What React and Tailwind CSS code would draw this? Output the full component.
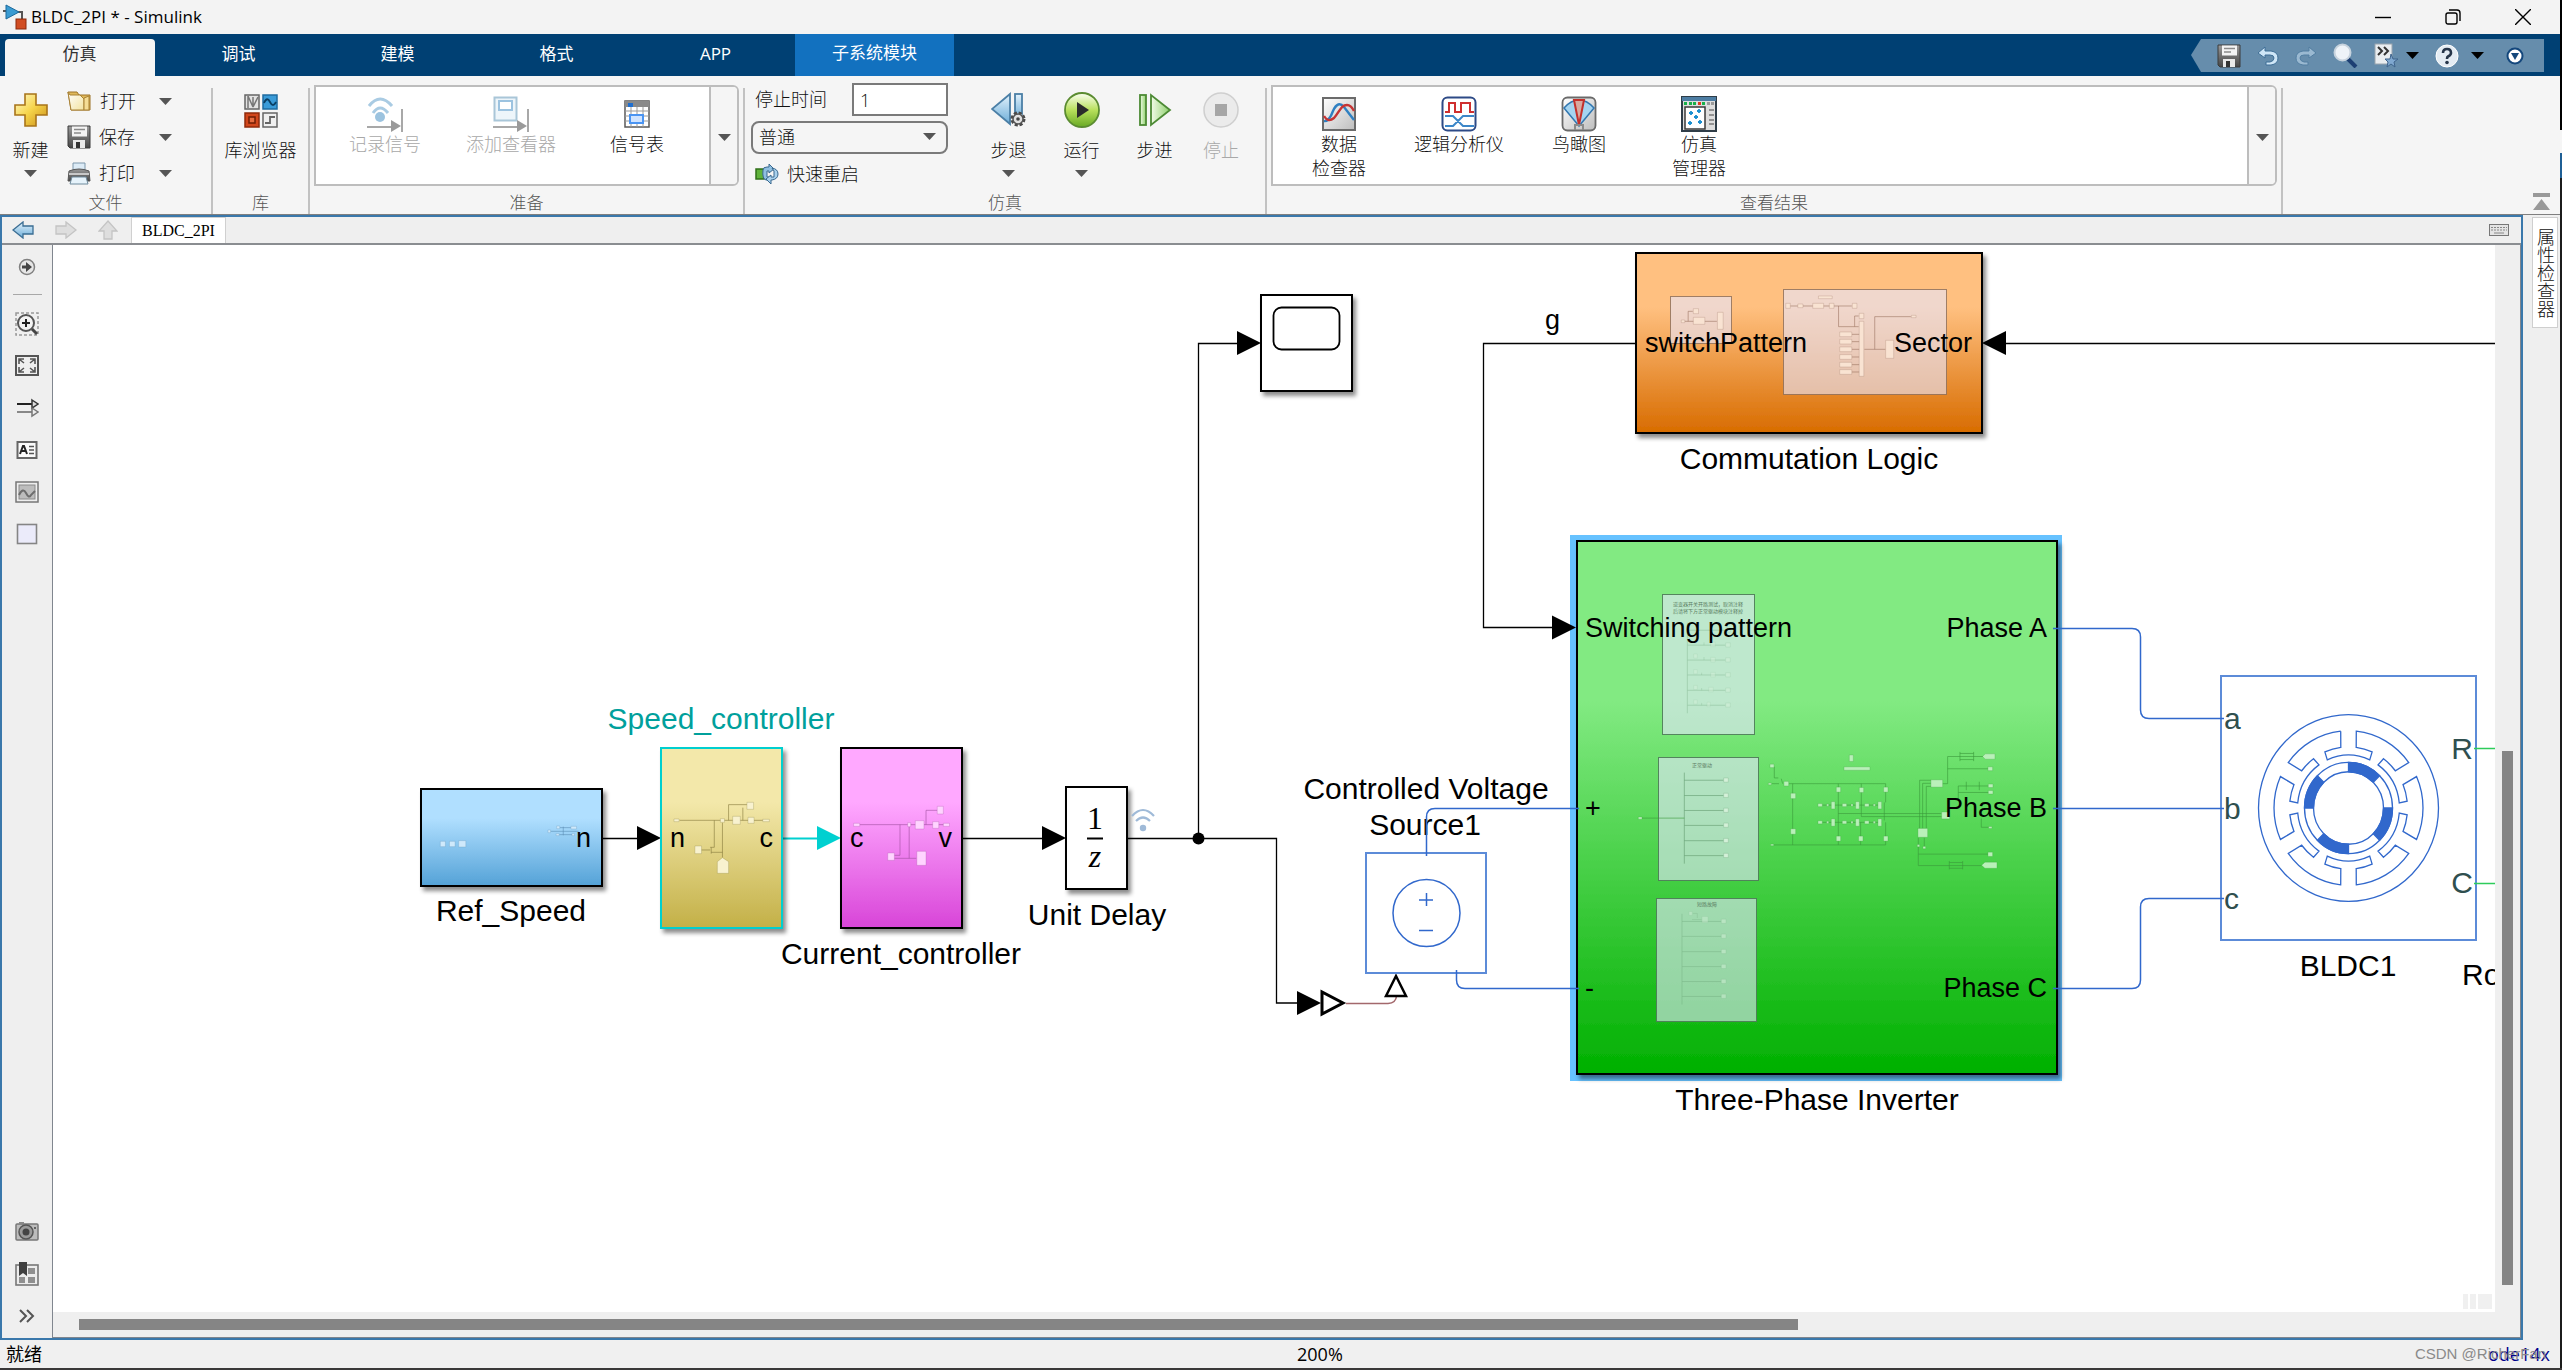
import React, { useState } from 'react';

const Caret = ({ className = 'text-[#555]' }) => (
    <svg width="13" height="7" viewBox="0 0 13 7" className={className}>
        <path d="M0 0H13L6.5 7Z" fill="currentColor" />
    </svg>
);

/* ---------- gradients shared by all icons ---------- */

const SharedDefs = () => (
    <svg width="0" height="0" className="absolute" aria-hidden="true">
        <defs>
            <linearGradient id="gold" x1="0" y1="0" x2="1" y2="1"><stop offset="0" stopColor="#fffbd0" /><stop offset=".5" stopColor="#f6d44a" /><stop offset="1" stopColor="#c98d17" /></linearGradient>
            <linearGradient id="paper" x1="0" y1="0" x2="1" y2="1"><stop offset="0" stopColor="#fff" /><stop offset="1" stopColor="#f3e3a0" /></linearGradient>
            <linearGradient id="steel" x1="0" y1="0" x2="0" y2="1"><stop offset="0" stopColor="#9a9a9a" /><stop offset="1" stopColor="#454545" /></linearGradient>
            <linearGradient id="silver" x1="0" y1="0" x2="1" y2="1"><stop offset="0" stopColor="#fff" /><stop offset="1" stopColor="#bdbdbd" /></linearGradient>
            <linearGradient id="ice" x1="0" y1="0" x2="0" y2="1"><stop offset="0" stopColor="#e3f2fc" /><stop offset="1" stopColor="#6cadd8" /></linearGradient>
            <linearGradient id="leaf" x1="0" y1="0" x2="0" y2="1"><stop offset="0" stopColor="#fbfff2" /><stop offset=".5" stopColor="#b8e05c" /><stop offset="1" stopColor="#68a924" /></linearGradient>
            <linearGradient id="mint" x1="0" y1="0" x2="1" y2="0"><stop offset="0" stopColor="#f2fbe9" /><stop offset="1" stopColor="#8ed06c" /></linearGradient>
        </defs>
    </svg>
);

/* ---------- ribbon icons ---------- */

const AppIcon = () => (
    <svg width="25" height="26" viewBox="0 0 25 26">
        <path d="M1 7H5M15 8H20V15" stroke="#555" strokeWidth="2" fill="none" />
        <path d="M4 1L17 8L4 15Z" fill="#3a9bd2" stroke="#1d6a9c" />
        <rect x="14" y="15" width="10" height="10" fill="#d14d22" stroke="#8c2a0c" />
    </svg>
);

const PlusIcon = () => (
    <svg width="34" height="34" viewBox="0 0 34 34">
        <path d="M11 1H22V12H33V22H22V33H11V22H1V12H11Z" fill="url(#gold)" stroke="#a8741a" strokeWidth="1.6" />
    </svg>
);

const FolderIcon = () => (
    <svg width="25" height="22" viewBox="0 0 25 22">
        <path d="M1 2H10L12 5H23V20H4Z" fill="#e0b95a" stroke="#9c7327" />
        <path d="M1 2L4 20H17V9L13 5L3 5Z" fill="url(#paper)" stroke="#a98235" />
        <path d="M17 8L22 6V20H17Z" fill="#f5dd95" stroke="#a98235" />
    </svg>
);

const SaveIcon = () => (
    <svg width="24" height="24" viewBox="0 0 24 24">
        <path d="M1 1H23V23H3L1 21Z" fill="url(#steel)" stroke="#3a3a3a" />
        <rect x="5" y="1.500" width="15" height="10" fill="#f4f4f4" />
        <path d="M7 4.500H18M7 8H14" stroke="#8a8a8a" strokeWidth="1.500" />
        <path d="M6 15H18V23H6Z" fill="#e9e9e9" />
        <rect x="9" y="17" width="4" height="6" fill="#333" />
    </svg>
);

const PrintIcon = () => (
    <svg width="24" height="23" viewBox="0 0 24 23">
        <path d="M6 1H18V10H6Z" fill="#dcebf6" stroke="#7d97ab" />
        <path d="M2 9Q12 5 22 9L23 19H1Z" fill="url(#steel)" stroke="#555" />
        <path d="M2 12H22" stroke="#c8c8c8" strokeWidth="2" />
        <path d="M5 15H19L21 22H3Z" fill="#e6f3fb" stroke="#6f8a9c" />
    </svg>
);

const LibraryIcon = () => (
    <svg width="34" height="34" viewBox="0 0 34 34">
        <rect x="1" y="1" width="14" height="14" fill="#e3e3e3" stroke="#666" strokeWidth="1.500" />
        <path d="M4 2V14M4 2L9 13V3M9 13L14 3" stroke="#777" strokeWidth="1.500" fill="none" />
        <rect x="19" y="1" width="14" height="14" fill="#3a9bd8" stroke="#1f6b9f" strokeWidth="1.500" />
        <path d="M20 9Q23 2 26 8T32 8" stroke="#0b3f63" strokeWidth="1.800" fill="none" />
        <rect x="1" y="19" width="14" height="14" fill="#d1461b" stroke="#8f2a0b" strokeWidth="1.500" />
        <rect x="5" y="23" width="6" height="6" fill="#e56b3f" stroke="#6f1d05" strokeWidth="1.500" />
        <rect x="19" y="19" width="14" height="14" fill="#f0f0f0" stroke="#666" strokeWidth="1.500" />
        <path d="M21 29H26V23H31" stroke="#666" strokeWidth="1.800" fill="none" />
    </svg>
);

const LogSignalIcon = () => (
    <svg width="36" height="36" viewBox="0 0 36 36">
        <g fill="none" stroke="#a9cbe3" strokeWidth="3">
            <path d="M2 10Q13 -4 25 10" />
            <path d="M6 17Q13 7 21 17" />
        </g>
        <circle cx="13" cy="21" r="5" fill="#9cc3df" />
        <path d="M0 31H26M35 13V36" stroke="#a8a8a8" strokeWidth="2" />
        <path d="M24 24L34 30L24 36Z" fill="#9a9a9a" />
    </svg>
);

const AddViewerIcon = () => (
    <svg width="36" height="36" viewBox="0 0 36 36">
        <rect x="1.500" y="1.500" width="22" height="23" fill="#edf5fa" stroke="#a9c6d8" strokeWidth="2" />
        <rect x="6" y="5" width="13" height="9" fill="#fff" stroke="#9cc3e0" strokeWidth="2" />
        <path d="M0 31H26M35 13V36" stroke="#a8a8a8" strokeWidth="2" />
        <path d="M24 24L34 30L24 36Z" fill="#9a9a9a" />
    </svg>
);

const SignalTableIcon = () => (
    <svg width="26" height="36" viewBox="0 0 26 36">
        <rect x="1" y="5" width="24" height="26" fill="#fff" stroke="#5a5a5a" strokeWidth="1.500" />
        <rect x="1" y="5" width="24" height="6" fill="#8a8a8a" />
        <rect x="4" y="7" width="5" height="4" fill="#1f6fd0" />
        <path d="M1 15H25M1 20H25M1 25H25M7 11V31M13 11V31M19 11V31" stroke="#999" />
        <rect x="6" y="19" width="13" height="8" fill="#cfe3ff" stroke="#4a94f2" strokeWidth="2" />
    </svg>
);

const RestartIcon = () => (
    <svg width="24" height="20" viewBox="0 0 24 20">
        <rect x="1" y="5" width="8" height="10" fill="#5fb33a" stroke="#2f6f18" strokeWidth="1.500" />
        <path d="M8 6Q8 3 12 3H14V0L19 5L14 9V7H12V13H14V16H11Q7 15 8 6Z" fill="#8fbfe0" stroke="#38688f" />
        <path d="M17 4Q23 5 23 10T17 16H16V20L11 15L16 11V13H19V7Z" fill="#a8d0ec" stroke="#38688f" />
    </svg>
);

const StepBackIcon = () => (
    <svg width="36" height="36" viewBox="0 0 36 36">
        <path d="M19 2V32L1 17Z" fill="url(#ice)" stroke="#4b7fa6" strokeWidth="1.800" />
        <rect x="24" y="2" width="7" height="24" fill="url(#ice)" stroke="#4b7fa6" strokeWidth="1.800" />
        <circle cx="27" cy="27" r="6" fill="#d8d8d8" stroke="#4a4a4a" strokeWidth="3" strokeDasharray="3 1.700" />
        <circle cx="27" cy="27" r="5" fill="#e2e2e2" stroke="#555" strokeWidth="1.500" />
        <circle cx="27" cy="27" r="1.800" fill="#444" />
    </svg>
);

const RunIcon = () => (
    <svg width="36" height="36" viewBox="0 0 36 36">
        <circle cx="18" cy="18" r="17" fill="url(#leaf)" stroke="#5b8c31" strokeWidth="1.800" />
        <path d="M13 10L25 18L13 26Z" fill="#2b2b2b" />
    </svg>
);

const StepForwardIcon = () => (
    <svg width="36" height="36" viewBox="0 0 36 36">
        <rect x="3" y="3" width="6" height="30" fill="url(#mint)" stroke="#4c8a34" strokeWidth="1.800" />
        <path d="M14 3V33L33 18Z" fill="url(#mint)" stroke="#4c8a34" strokeWidth="1.800" />
    </svg>
);

const StopIcon = () => (
    <svg width="36" height="36" viewBox="0 0 36 36">
        <circle cx="18" cy="18" r="17" fill="#ebebeb" stroke="#cfcfcf" strokeWidth="1.500" />
        <rect x="12" y="12" width="12" height="12" fill="#a6a6a6" />
    </svg>
);

const DataInspectorIcon = () => (
    <svg width="36" height="36" viewBox="0 0 36 36">
        <rect x="2" y="2" width="32" height="32" fill="url(#silver)" stroke="#6b6b6b" strokeWidth="2" />
        <path d="M3 25Q8 26 12 15Q17 4 23 11L33 24" fill="none" stroke="#2f80c2" strokeWidth="2.400" />
        <path d="M3 20Q7 27 13 22C19 15 20 9 26 9Q30 9 33 15" fill="none" stroke="#c63434" strokeWidth="2.400" />
    </svg>
);

const LogicAnalyzerIcon = () => (
    <svg width="36" height="36" viewBox="0 0 36 36">
        <rect x="1.500" y="1.500" width="33" height="33" rx="5" fill="#fff" stroke="#2d4a86" strokeWidth="2" />
        <path d="M4 16H8V7H14V16H20V7H29V16H33" fill="none" stroke="#cf2f2f" strokeWidth="2" />
        <path d="M4 20H12L22 30H33M4 30H12L22 20H33" fill="none" stroke="#3b86c8" strokeWidth="2" />
    </svg>
);

const BirdsEyeIcon = () => (
    <svg width="36" height="36" viewBox="0 0 36 36">
        <rect x="1.500" y="1.500" width="33" height="33" rx="5" fill="url(#silver)" stroke="#6a6a6a" strokeWidth="1.800" />
        <path d="M18 30L3 12Q10 4 18 4T33 12Z" fill="#a5d4f0" stroke="#3277b0" strokeWidth="1.500" />
        <path d="M18 29L13 4H23Z" fill="#d8a9a0" stroke="#c4302b" strokeWidth="2" />
        <path d="M14 34V29H22V34" fill="none" stroke="#8a8a8a" strokeWidth="2" />
    </svg>
);

const SimManagerIcon = () => (
    <svg width="36" height="36" viewBox="0 0 36 36">
        <rect x="1" y="1" width="34" height="34" fill="#dedede" stroke="#2f3d48" strokeWidth="2" />
        <rect x="1" y="1" width="34" height="4" fill="#4d7da3" />
        <g fill="#18b04a"><rect x="3" y="6" width="3" height="3" /><rect x="8" y="6" width="3" height="3" /><rect x="12" y="6" width="3" height="3" /><rect x="21" y="6" width="3" height="3" /></g>
        <rect x="17" y="6" width="3" height="3" fill="#e03a20" />
        <path d="M26 7.500H33" stroke="#9a9a9a" strokeWidth="3" strokeDasharray="3 1" />
        <rect x="4" y="11" width="20" height="22" fill="#fff" stroke="#3a3a3a" strokeWidth="1.500" />
        <path d="M8 17H12M10 15V19M16 15H20M18 13V17M13 21H17M15 19V23M7 27H11M9 25V29M17 26H21M19 24V28" stroke="#1b8fd0" strokeWidth="1.800" />
        <path d="M28 14H33M28 19H33M28 24H33M28 28H33" stroke="#7a7a7a" strokeWidth="1.500" />
    </svg>
);

/* ---------- quick access icons ---------- */

const UndoIcon = ({ dim }) => (
    <svg width="22" height="20" viewBox="0 0 22 20" className={dim ? '-scale-x-100 opacity-50' : ''}>
        <path d="M8 1L1 7L8 12V9H13Q17 9 17 12T13 16H9V19H14Q21 18 21 12T14 5H8Z" fill="#cfe6f7" stroke="#3f6f96" />
    </svg>
);

const SearchIcon = () => (
    <svg width="25" height="25" viewBox="0 0 25 25">
        <path d="M14 15L23 24" stroke="#1d3f73" strokeWidth="4" />
        <circle cx="9.500" cy="9.500" r="8" fill="#eef3f8" stroke="#c6d2dd" strokeWidth="2" />
    </svg>
);

const FavoriteIcon = () => (
    <svg width="24" height="25" viewBox="0 0 24 25">
        <rect x="1" y="1" width="17" height="20" fill="#e9edf0" stroke="#9aa5ae" />
        <path d="M4 4L8 8L4 12M10 4L14 8L10 12" fill="none" stroke="#333" strokeWidth="2" />
        <path d="M17 11L19 16H24L20 19L21 24L17 21L13 24L14 19L11 16H16Z" fill="#7fa8d0" stroke="#3f648c" />
    </svg>
);

const HelpIcon = () => (
    <svg width="24" height="24" viewBox="0 0 24 24">
        <circle cx="12" cy="12" r="11" fill="#e4ecf3" stroke="#fff" />
        <path d="M8 9Q8 5 12 5T16 9Q16 11 13 12.500Q12 13 12 15" fill="none" stroke="#27364a" strokeWidth="2.600" />
        <circle cx="12" cy="18.500" r="1.800" fill="#27364a" />
    </svg>
);

const RoundDownIcon = () => (
    <svg width="18" height="18" viewBox="0 0 18 18">
        <circle cx="9" cy="9" r="7.500" fill="#fff" stroke="#14477c" strokeWidth="2" />
        <path d="M5 6H13L9 13Z" fill="#14477c" />
    </svg>
);

/* ---------- palette icons ---------- */

const paletteTop = [
    { name: '放大', icon: <g><path d="M1 1H23V23H1Z" fill="none" stroke="#999" strokeWidth="1.500" strokeDasharray="3 2" /><circle cx="11" cy="11" r="8" fill="#f4f4f4" stroke="#555" strokeWidth="2" /><path d="M17 17L22 22" stroke="#444" strokeWidth="3" /><path d="M7 11H15M11 7V15" stroke="#222" strokeWidth="2" /></g> },
    { name: '适应视图', icon: <g><rect x="1" y="2" width="22" height="19" fill="#efefef" stroke="#555" strokeWidth="2" /><path d="M4 10V5H9M15 5H20V10M20 13V18H15M9 18H4V13M4 5L9 9M20 5L15 9M20 18L15 14M4 18L9 14" fill="none" stroke="#555" strokeWidth="1.600" /></g> },
    { name: '信号', icon: <g><path d="M2 8H17" stroke="#222" strokeWidth="2" /><path d="M2 16H17" stroke="#888" strokeWidth="2" /><path d="M17 4L23 8L17 12Z" fill="#ddd" stroke="#333" strokeWidth="1.500" /><path d="M17 12L23 16L17 20Z" fill="#eee" stroke="#777" strokeWidth="1.500" /></g> },
    { name: '注释', icon: <g><rect x="2.500" y="4" width="19" height="16" fill="#fafafa" stroke="#666" strokeWidth="2" /><path d="M5 16L8 8H9L12 16M6 13H11" stroke="#222" strokeWidth="2" fill="none" /><path d="M14 8.500H19M14 12H19M14 15.500H19" stroke="#555" strokeWidth="1.400" /></g> },
    { name: '图像', icon: <g><rect x="1" y="2" width="22" height="20" fill="#eee" stroke="#777" strokeWidth="1.500" /><rect x="4" y="5" width="16" height="14" fill="#bdbdbd" stroke="#8a8a8a" /><path d="M4 15Q8 7 11 13T16 15L20 11" fill="none" stroke="#6d6d6d" strokeWidth="2" /></g> },
    { name: '区域', icon: <rect x="2.500" y="2.500" width="19" height="19" fill="#ebebfa" stroke="#858585" strokeWidth="1.600" /> },
];

const paletteBottom = [
    { name: '截图', icon: <g><rect x="1" y="4" width="22" height="16" rx="1" fill="#bcbcbc" stroke="#777" strokeWidth="1.500" /><rect x="4" y="2" width="5" height="3" fill="#888" /><circle cx="11" cy="12" r="7" fill="#9a9a9a" stroke="#555" strokeWidth="1.500" /><circle cx="11" cy="12" r="3.500" fill="#444" /><circle cx="20" cy="8" r="1" fill="#444" /></g> },
    { name: '书签', icon: <g><rect x="1" y="3" width="22" height="20" fill="#ececec" stroke="#777" strokeWidth="1.600" /><path d="M13 6H20V12H13ZM13 15H20V21H13ZM4 15H10V21H4Z" fill="#8f8f8f" /><path d="M4 0H12V14L8 11L4 14Z" fill="#3f3f3f" /></g> },
    { name: '展开', icon: <path d="M5 6L11 12L5 18M12 6L18 12L12 18" fill="none" stroke="#555" strokeWidth="2" /> },
];

const PaletteButton = ({ item }) => (
    <button type="button" aria-label={item.name} className="h-6 w-6">
        <svg width="24" height="24" viewBox="0 0 24 24">{item.icon}</svg>
    </button>
);

/* ---------- ribbon ---------- */

const Divider = () => <div className="mt-3 w-0.5 shrink-0 bg-[#c2c2c2]" />;

const Section = ({ label, className = '', children }) => (
    <section className={`flex flex-col ${className}`}>
        <div className="flex h-[116px]">{children}</div>
        <h2 className="h-[22px] text-center text-[17px] leading-[22px] text-[#555]">{label}</h2>
    </section>
);

const FileRow = ({ icon, label }) => (
    <div className="flex h-[26px] items-center">
        <button type="button" className="flex w-[78px] items-center gap-2">
            {icon}
            <span>{label}</span>
        </button>
        <button type="button" aria-label={`${label}选项`} className="flex w-10 justify-center"><Caret /></button>
    </div>
);

const GalleryItem = ({ icon, lines, disabled, className }) => (
    <button type="button" disabled={disabled} className={`flex flex-col items-center leading-6 ${className} ${disabled ? 'text-[#a8a8a8]' : ''}`}>
        {icon}
        {lines.map((line) => <span key={line}>{line}</span>)}
    </button>
);

const Gallery = ({ children }) => (
    <div className="mx-1 mt-[9px] flex h-[101px] flex-1 rounded-r-md border-2 border-[#bdbdbd] bg-white">
        <div className="flex flex-1 items-start px-1.5 pt-[9px]">{children}</div>
        <button type="button" aria-label="更多" className="flex w-7 items-center justify-center rounded-r border-l-2 border-[#bdbdbd] bg-[#f5f5f5] pt-1"><Caret /></button>
    </div>
);

const SimButton = ({ icon, label, caret, disabled, className = 'w-[73px]' }) => (
    <button type="button" disabled={disabled} className={`flex flex-col items-center pt-4 ${className} ${disabled ? 'text-[#a8a8a8]' : ''}`}>
        {icon}
        <span className="mt-2.5 leading-6">{label}</span>
        {caret && <span className="mt-2"><Caret /></span>}
    </button>
);

const Ribbon = () => {
    const [stopTime, setStopTime] = useState('1');
    const [mode, setMode] = useState('普通');

    return (
        <div className="flex h-[139px] shrink-0 border-b border-[#7f7f7f] bg-[#f5f5f5] text-[18px] font-light text-[#111]">
            <Section label="文件" className="w-[211px]">
                <button type="button" className="flex w-[61px] flex-col items-center pt-[17px]">
                    <PlusIcon />
                    <span className="mt-[11px] leading-6">新建</span>
                    <span className="mt-2"><Caret /></span>
                </button>
                <div className="flex flex-col gap-2.5 pl-1.5 pt-3">
                    <FileRow icon={<FolderIcon />} label="打开" />
                    <FileRow icon={<SaveIcon />} label="保存" />
                    <FileRow icon={<PrintIcon />} label="打印" />
                </div>
            </Section>
            <Divider />
            <Section label="库" className="w-[95px]">
                <button type="button" className="flex flex-1 flex-col items-center pt-[18px]">
                    <LibraryIcon />
                    <span className="mt-2.5 leading-6">库浏览器</span>
                </button>
            </Section>
            <Divider />
            <Section label="准备" className="w-[433px]">
                <Gallery>
                    <GalleryItem className="w-[126px]" disabled icon={<LogSignalIcon />} lines={['记录信号']} />
                    <GalleryItem className="w-[126px]" disabled icon={<AddViewerIcon />} lines={['添加查看器']} />
                    <GalleryItem className="w-[126px]" icon={<SignalTableIcon />} lines={['信号表']} />
                </Gallery>
            </Section>
            <Divider />
            <Section label="仿真" className="w-[520px]">
                <div className="ml-1.5 flex w-[197px] flex-col pt-[7px]">
                    <div className="flex h-[33px] items-center justify-between pl-1">
                        <label htmlFor="stop-time">停止时间</label>
                        <input id="stop-time" value={stopTime} onChange={(e) => setStopTime(e.target.value)} className="h-[33px] w-24 border-2 border-[#7a7a7a] bg-white px-1.5" />
                    </div>
                    <div className="relative mt-[5px]">
                        <select aria-label="仿真模式" value={mode} onChange={(e) => setMode(e.target.value)} className="h-[33px] w-full appearance-none rounded-lg border-2 border-[#7a7a7a] bg-[#f5f5f5] px-1.5">
                            <option>普通</option>
                            <option>加速</option>
                        </select>
                        <span className="pointer-events-none absolute right-3 top-3"><Caret /></span>
                    </div>
                    <button type="button" className="mt-1.5 flex h-7 items-center gap-2 pl-1">
                        <RestartIcon />
                        快速重启
                    </button>
                </div>
                <div className="ml-6 flex">
                    <SimButton icon={<StepBackIcon />} label="步退" caret />
                    <SimButton icon={<RunIcon />} label="运行" caret />
                    <SimButton icon={<StepForwardIcon />} label="步进" />
                    <SimButton icon={<StopIcon />} label="停止" disabled className="w-[60px]" />
                </div>
            </Section>
            <Divider />
            <Section label="查看结果" className="flex-1">
                <Gallery>
                    <GalleryItem className="w-[120px]" icon={<DataInspectorIcon />} lines={['数据', '检查器']} />
                    <GalleryItem className="w-[120px]" icon={<LogicAnalyzerIcon />} lines={['逻辑分析仪']} />
                    <GalleryItem className="w-[120px]" icon={<BirdsEyeIcon />} lines={['鸟瞰图']} />
                    <GalleryItem className="w-[120px]" icon={<SimManagerIcon />} lines={['仿真', '管理器']} />
                </Gallery>
            </Section>
            <Divider />
            <div className="flex w-[277px] items-end justify-end pb-1 pr-2.5">
                <button type="button" aria-label="折叠工具条">
                    <svg width="17" height="17" viewBox="0 0 17 17" fill="#999"><path d="M0 0H17V4H0ZM8.500 6L17 17H0Z" /></svg>
                </button>
            </div>
        </div>
    );
};

const tabs = ['仿真', '调试', '建模', '格式', 'APP'];

const TabBar = () => (
    <div className="flex h-[42px] shrink-0 items-start justify-between bg-[#004073] text-[17px] text-white">
        <nav className="flex h-full">
            {tabs.map((tab, i) => (
                <div key={tab} className="flex w-[159px] items-end justify-center">
                    <button type="button" className={i === 0 ? 'h-[37px] w-[150px] rounded-t bg-[#f5f5f5] pb-2 text-[#333]' : 'h-[37px] w-[150px] pb-2'}>{tab}</button>
                </div>
            ))}
            <button type="button" className="h-full w-[159px] bg-[#1271bf] pb-1">子系统模块</button>
        </nav>
        <div className="mr-4 mt-[5px] flex h-[33px]">
            <svg width="10" height="33" viewBox="0 0 10 33"><path d="M10 0V33L0 16Z" fill="#668dac" /></svg>
            <div className="flex items-center bg-[#668dac] pl-4 pr-5 text-black">
                <button type="button" aria-label="保存"><SaveIcon /></button>
                <button type="button" aria-label="撤销" className="ml-4"><UndoIcon /></button>
                <button type="button" aria-label="重做" className="ml-4"><UndoIcon dim /></button>
                <button type="button" aria-label="查找" className="ml-4"><SearchIcon /></button>
                <button type="button" aria-label="收藏夹" className="ml-4 flex items-center gap-2"><FavoriteIcon /><Caret className="text-black" /></button>
                <button type="button" aria-label="帮助" className="ml-4 flex items-center gap-3"><HelpIcon /><Caret className="text-black" /></button>
                <button type="button" aria-label="更多" className="ml-[22px]"><RoundDownIcon /></button>
            </div>
        </div>
    </div>
);

const TitleBar = () => (
    <header className="flex h-[34px] shrink-0 items-center bg-[#f3f3f3] pr-0.5 text-[17px] text-black">
        <div className="flex flex-1 items-center gap-1 pl-0.5">
            <AppIcon />
            <h1>BLDC_2PI * - Simulink</h1>
        </div>
        <div className="flex">
            <button type="button" aria-label="最小化" className="flex w-[70px] items-center justify-center"><svg width="16" height="16" viewBox="0 0 16 16"><path d="M0 8.500H16" stroke="#000" strokeWidth="1.400" /></svg></button>
            <button type="button" aria-label="还原" className="flex w-[70px] items-center justify-center"><svg width="16" height="16" viewBox="0 0 16 16" fill="none" stroke="#000" strokeWidth="1.400"><rect x="1" y="4" width="11" height="11" rx="2" /><path d="M4 1H12Q15 1 15 4V12" /></svg></button>
            <button type="button" aria-label="关闭" className="flex w-[70px] items-center justify-center"><svg width="16" height="16" viewBox="0 0 16 16"><path d="M0 0L16 16M16 0L0 16" stroke="#000" strokeWidth="1.400" /></svg></button>
        </div>
    </header>
);

/* ---------- model diagram ---------- */

// simplified content preview painted inside a subsystem block
const Preview = ({ lines, boxes, shapes, transform, fill, stroke, opacity = 1 }) => (
    <g transform={transform} opacity={opacity}>
        <path d={lines} fill="none" stroke={stroke} strokeOpacity=".6" strokeWidth="1" vectorEffect="non-scaling-stroke" />
        {boxes.map(([x, y, w, h], i) => <rect key={i} x={x} y={y} width={w} height={h} fill={fill} stroke={stroke} strokeOpacity=".25" vectorEffect="non-scaling-stroke" />)}
        {shapes && <path d={shapes} fill={fill} stroke={stroke} strokeOpacity=".25" vectorEffect="non-scaling-stroke" />}
    </g>
);

const Block = ({ x, y, w, h, fill, stroke = '#000' }) => (
    <rect x={x} y={y} width={w} height={h} fill={fill} stroke={stroke} strokeWidth="2" filter="url(#blockShadow)" />
);

const Name = ({ x, y, children, ...rest }) => <text x={x} y={y} fontSize="30" textAnchor="middle" {...rest}>{children}</text>;
const Port = ({ x, y, children, ...rest }) => <text x={x} y={y} fontSize="27" {...rest}>{children}</text>;

const polar = (r, deg) => {
    const a = (deg * Math.PI) / 180;
    return `${(r * Math.sin(a)).toFixed(2)} ${(-r * Math.cos(a)).toFixed(2)}`;
};

const statorPath = [0, 60, 120, 180, 240, 300].map((t, i) => (
    `${i === 0 ? 'M' : 'L'}${polar(74.5, t - 6)}L${polar(59, t - 7.5)}A59 59 0 0 0 ${polar(59, t - 23.6)}L${polar(51, t - 24.6)}` +
    `A51 51 0 0 1 ${polar(51, t + 24.6)}L${polar(59, t + 23.6)}A59 59 0 0 0 ${polar(59, t + 7.5)}L${polar(74.5, t + 6)}` +
    `A74.5 74.5 0 0 1 ${polar(74.5, t + 54)}`
)).join('');

const Motor = () => (
    <g transform="translate(2348.5 808) scale(1 1.037)" fill="none" stroke="#3168cc" strokeWidth="1.300">
        <circle r="90" />
        <path d={statorPath} />
        <circle r="44" />
        <circle r="35" />
        {[0, 90, 180, 270].map((t) => (
            <path key={t} fill="#3168cc" d={`M${polar(44, t)}A44 44 0 0 1 ${polar(44, t + 45)}L${polar(35, t + 45)}A35 35 0 0 0 ${polar(35, t)}Z`} />
        ))}
    </g>
);

const gateRows = [
    { x: 382, ys: [288, 327, 366, 405, 445, 484], end: 497 },
    { x: 373, ys: [680, 720, 759, 798, 838, 877], end: 491 },
    { x: 366, ys: [1049, 1088, 1128, 1167, 1206, 1245], end: 484 },
];

const bridgeCells = [774, 847, 914].flatMap((x) => [745, 790].flatMap((y) => [
    [x, y - 4, 13, 8], [x + 26, y - 3, 6, 6], [x + 40, y - 9, 11, 19],
]));

const Diagram = () => (
    <svg viewBox="53 245 2442 1067" width="2442" height="1067" className="absolute left-0 top-0" fontFamily='"Liberation Sans", Arial, sans-serif' fill="#000">
        <defs>
            <filter id="blockShadow" x="-10%" y="-10%" width="125%" height="125%"><feDropShadow dx="3" dy="4" stdDeviation="2" floodColor="#000" floodOpacity=".45" /></filter>
            <linearGradient id="blueBlock" x1="0" y1="0" x2="0" y2="1"><stop offset=".3" stopColor="#b0dfff" /><stop offset="1" stopColor="#54a2d7" /></linearGradient>
            <linearGradient id="sandBlock" x1="0" y1="0" x2="0" y2="1"><stop offset=".3" stopColor="#f3e8aa" /><stop offset="1" stopColor="#c3b047" /></linearGradient>
            <linearGradient id="pinkBlock" x1="0" y1="0" x2="0" y2="1"><stop offset=".3" stopColor="#ffa8ff" /><stop offset="1" stopColor="#d845d8" /></linearGradient>
            <linearGradient id="orangeBlock" x1="0" y1="0" x2="0" y2="1"><stop offset=".3" stopColor="#ffc080" /><stop offset="1" stopColor="#d86c00" /></linearGradient>
            <linearGradient id="greenBlock" x1="0" y1="0" x2="0" y2="1"><stop offset=".3" stopColor="#82ea82" /><stop offset="1" stopColor="#00b000" /></linearGradient>
        </defs>

        {/* signal lines */}
        <g fill="none" stroke="#000" strokeWidth="1.300">
            <path d="M602 838.500H638M962 838.500H1043M1127 838.500H1276.500V1003H1298" />
            <path d="M1198.500 838.500V343.500H1238" />
            <path d="M1636 343.500H1483.500V627.500H1553" />
            <path d="M2005 343.500H2495" />
        </g>
        <path d="M782 838.500H818" stroke="#00d0d0" strokeWidth="2" />
        <path d="M637 826L661 838L637 850ZM1042 826L1066 838L1042 850ZM1237 331L1261 343L1237 355ZM2006 331L1982 343L2006 355ZM1297 991L1321 1003L1297 1015Z" />
        <path d="M817 826L841 838L817 850Z" fill="#00d0d0" />
        <circle cx="1198.500" cy="838.500" r="6" />

        {/* Ref_Speed */}
        <Block x={421} y={789} w={181} h={97} fill="url(#blueBlock)" />
        <Preview transform="translate(400 680) scale(.5102 .3333)" fill="#cfe9fb" stroke="#5c8fb5"
            lines="M295 454H350M313 443H335M320 440V466M312 464H337"
            boxes={[[79, 484, 10, 16], [97, 484, 11, 16], [115, 482, 14, 19], [307, 438, 6, 8], [335, 439, 11, 8], [290, 450, 5, 8], [306, 461, 6, 6], [337, 461, 5, 6]]} />
        <Port x="591" y="847" textAnchor="end">n</Port>
        <Name x="511" y="921">Ref_Speed</Name>

        {/* Speed_controller */}
        <Block x={661} y={748} w={121} h={180} fill="url(#sandBlock)" stroke="#00cfcf" />
        <Preview transform="translate(400 680) scale(.5102 .3333)" fill="#f8f2cf" stroke="#857a3c"
            lines="M548 421H712M644 421V374H680M672 421V383M616 421V502H608M610 502V521M590 510H608M632 428V532M610 517H632"
            boxes={[[537, 417, 10, 8], [628, 416, 8, 11], [652, 409, 15, 24], [682, 412, 12, 18], [711, 418, 13, 7], [680, 367, 13, 21], [578, 498, 13, 23]]}
            shapes="M622 580V545L632 533L644 545V580Z" />
        <Port x="670" y="847">n</Port>
        <Port x="773" y="847" textAnchor="end">c</Port>
        <Name x="721" y="729" fill="#00a09c">Speed_controller</Name>

        {/* Current_controller */}
        <Block x={841} y={748} w={121} h={180} fill="url(#pinkBlock)" />
        <Preview transform="translate(400 680) scale(.5102 .3333)" fill="#ffd4ff" stroke="#a050a0"
            lines="M901 434H1066M980 434V526H968M998 440V535M968 535H1012M1031 434V391H1053"
            boxes={[[889, 430, 12, 9], [995, 428, 6, 12], [1010, 422, 17, 25], [1044, 425, 12, 20], [1065, 430, 12, 9], [1053, 379, 12, 23], [956, 519, 13, 22], [1013, 514, 18, 42]]} />
        <Port x="850" y="847">c</Port>
        <Port x="952" y="847" textAnchor="end">v</Port>
        <Name x="901" y="964">Current_controller</Name>

        {/* Unit Delay */}
        <Block x={1066} y={787} w={61} h={102} fill="#fff" />
        <g fontFamily='"Liberation Serif", "Times New Roman", serif' fontSize="32" textAnchor="middle">
            <text x="1095" y="829">1</text>
            <text x="1095" y="867" fontStyle="italic">z</text>
        </g>
        <path d="M1087 838.500H1103" stroke="#000" strokeWidth="2" />
        <Name x="1097" y="925">Unit Delay</Name>
        <g fill="none" stroke="#9fbad8" strokeWidth="2.200">
            <path d="M1132 816Q1143 804 1154 816M1136 821Q1143 814 1150 821" />
            <circle cx="1143" cy="828" r="3.200" fill="#9fbad8" stroke="none" />
        </g>

        {/* Scope */}
        <Block x={1261} y={295} w={91} h={96} fill="#fff" />
        <rect x="1273.500" y="307.500" width="66" height="42" rx="8" fill="#fff" stroke="#000" strokeWidth="1.800" />

        {/* Commutation Logic */}
        <Port x="1545" y="329">g</Port>
        <Block x={1636} y={253} w={346} h={180} fill="url(#orangeBlock)" />
        <g fill="#e6e6ff" fillOpacity=".6" stroke="#8a6a55" strokeOpacity=".8">
            <rect x="1670.500" y="296.500" width="61" height="47" />
            <rect x="1783.500" y="289.500" width="163" height="105" />
        </g>
        <Preview transform="translate(1140 230) scale(.574 .3333)" fill="#f9e3d2" stroke="#9c7563"
            lines="M949 274H1005M955 274V244H963M1130 228H1240M1217 228V290H1252M1245 290V258H1252M1280 358V260H1343M1262 358H1299M1240 313H1254M1240 335H1254M1240 358H1254M1240 381H1254M1240 404H1254M1240 426H1254"
            boxes={[[943, 270, 6, 8], [964, 236, 9, 15], [964, 262, 20, 21], [1006, 247, 10, 51], [1125, 220, 8, 15], [1146, 222, 9, 11], [1172, 220, 19, 15], [1201, 220, 8, 15], [1241, 220, 8, 15], [1182, 198, 24, 8], [1253, 250, 8, 16], [1253, 274, 8, 165], [1344, 256, 8, 7], [1299, 331, 14, 54],
                [1219, 306, 21, 14], [1219, 328, 21, 14], [1219, 351, 21, 14], [1219, 374, 21, 14], [1219, 397, 21, 14], [1219, 419, 21, 14]]} />
        <Port x="1645" y="352">switchPattern</Port>
        <Port x="1972" y="352" textAnchor="end">Sector</Port>
        <Name x="1809" y="469">Commutation Logic</Name>

        {/* Three-Phase Inverter, selected */}
        <rect x="1570" y="535" width="492" height="546" fill="#66c2ff" />
        <Block x={1577} y={541} w={480} h={533} fill="url(#greenBlock)" />
        <path d="M1552 615.500L1576 627.500L1552 639.500Z" />
        <g fill="#e6e6ff" fillOpacity=".6" stroke="#4c7a56" strokeOpacity=".9">
            <rect x="1662.500" y="594.500" width="92" height="140" />
            <rect x="1658.500" y="757.500" width="100" height="123" />
            <rect x="1656.500" y="898.500" width="100" height="123" />
        </g>
        <g fontFamily='"Noto Sans CJK SC", sans-serif' fontSize="5" textAnchor="middle" fill="#5b7d62">
            <text x="1708" y="606">逆变器开关开路测试，取消注释</text>
            <text x="1708" y="613">后请将下方正常驱动模块注释掉</text>
            <text x="1702" y="767">正常驱动</text>
            <text x="1707" y="906">短路故障</text>
        </g>
        {gateRows.map(({ x, ys, end }, i) => (
            <Preview key={x} transform="translate(1560 520) scale(.3333 .3827)" opacity={i === 1 ? 0.9 : 0.45} fill="#d8f3dc" stroke="#5c9468"
                lines={`M${x} ${ys[0] - 20}V${ys[5] + 21}` + ys.map((y) => `M${x} ${y}H${end}`).join('')}
                boxes={ys.map((y) => [end, y - 6, 14, 11])} />
        ))}
        <Preview transform="translate(1560 520) scale(.3333 .3827)" opacity={0.4} fill="#d8f3dc" stroke="#6fa47a"
            lines="M432 320V327M432 358V366M425 399V405M425 439V445M425 478V484M398 1028H412V1040M396 1044H425"
            boxes={[[401, 350, 11, 11], [401, 391, 11, 11], [401, 432, 11, 11], [401, 470, 11, 11], [452, 319, 14, 12], [452, 359, 14, 12], [452, 398, 14, 12], [446, 437, 14, 12], [441, 476, 10, 12], [387, 1023, 10, 10], [426, 1036, 18, 16]]} />
        <Preview transform="translate(1560 520) scale(.3333 .3827)" fill="#b9f0b9" stroke="#3a9a3a"
            lines="M240 779H373M643 645V674H655M636 689H657M664 676L668 689M687 689H977V738M698 689V849M641 849H977M835 689V849M904 689V775M973 738V785M977 790V849M902 790V849M835 767H1145M904 775H1150M780 745H965M780 790H965M1147 689H1163V618H1290M1163 650H1288M1079 806V680H1113M1088 806V688H1113M1099 806V696H1113M1195 730V695H1288M1195 712H1288M1264 780V803H1288M1075 830V903H1265M1075 873H1288M1093 830V853M1200 606V630M1241 606V630M1219 684V706M1258 684V706M1168 891V913M1208 891V913M1200 610H1241M1200 626H1241M1168 895H1208M1168 910H1208"
            boxes={[[235, 776, 11, 6], [630, 638, 12, 9], [625, 687, 9, 5], [672, 683, 14, 12], [692, 714, 15, 14], [692, 807, 15, 14], [829, 698, 13, 13], [898, 699, 13, 13], [971, 698, 13, 13], [829, 826, 13, 13], [896, 826, 13, 13], [971, 826, 13, 13], [632, 847, 9, 4], [868, 614, 12, 17], [852, 645, 78, 9],
                [1113, 679, 35, 19], [1145, 763, 24, 18], [1074, 806, 29, 23], [1284, 645, 14, 10], [1285, 690, 14, 9], [1285, 707, 14, 9], [1286, 801, 10, 5], [1284, 868, 14, 11], [1072, 848, 7, 6], [1089, 853, 8, 6], ...bridgeCells]}
            shapes="M1268 618L1276 611H1305V625H1276ZM1265 902L1275 894H1311V910H1275Z" />
        <Port x="1585" y="637">Switching pattern</Port>
        <Port x="1585" y="817">+</Port>
        <Port x="1585" y="997">-</Port>
        <Port x="2047" y="637" textAnchor="end">Phase A</Port>
        <Port x="2047" y="817" textAnchor="end">Phase B</Port>
        <Port x="2047" y="997" textAnchor="end">Phase C</Port>
        <Name x="1817" y="1110">Three-Phase Inverter</Name>

        {/* Controlled Voltage Source1 */}
        <path d="M1322 992V1014L1343 1003Z" fill="#fff" stroke="#000" strokeWidth="3" />
        <path d="M1346 1003.500H1388Q1396 1003 1396.500 996" fill="none" stroke="#a3686c" strokeWidth="1.500" />
        <path d="M1396 976L1406 996H1386Z" fill="#fff" stroke="#000" strokeWidth="2.500" />
        <Name x="1426" y="799">Controlled Voltage</Name>
        <Name x="1425" y="835">Source1</Name>
        <rect x="1366" y="853" width="120" height="120" fill="#fff" stroke="#5c8bd8" strokeWidth="2" />
        <g fill="none" stroke="#3168cc" strokeWidth="1.500">
            <circle cx="1426.500" cy="913" r="33.500" />
            <path d="M1419 900H1433M1426.500 893V906M1419 930.500H1433" />
            <path d="M1426.500 856V817Q1426.500 808.500 1435 808.500H1579" />
            <path d="M1456.500 970V980Q1456.500 988.500 1465 988.500H1579" />
        </g>

        {/* BLDC1 */}
        <rect x="2221" y="676" width="255" height="264" fill="#fff" stroke="#5c8bd8" strokeWidth="2" />
        <Motor />
        <g fill="none" stroke="#3168cc" strokeWidth="1.500">
            <path d="M2053 628.500H2132Q2140.500 628.500 2140.500 637V710Q2140.500 718.500 2149 718.500H2224" />
            <path d="M2053 808.500H2224" />
            <path d="M2053 988.500H2132Q2140.500 988.500 2140.500 980V907Q2140.500 898.500 2149 898.500H2224" />
        </g>
        <path d="M2474 748.500H2495M2474 883.500H2495" stroke="#2ecc5b" strokeWidth="1.500" />
        <g fill="#2f4f4f" fontSize="30">
            <text x="2224" y="729">a</text>
            <text x="2224" y="819">b</text>
            <text x="2224" y="909">c</text>
            <text x="2473" y="759" textAnchor="end">R</text>
            <text x="2473" y="893" textAnchor="end">C</text>
        </g>
        <Name x="2348" y="976">BLDC1</Name>
        <text x="2462" y="985" fontSize="30">Ro</text>

        <path d="M2463 1294H2468V1309H2463ZM2470 1294H2476V1309H2470ZM2478 1294H2492V1309H2478Z" fill="#f0f0f0" />
    </svg>
);

/* ---------- editor ---------- */

const Editor = () => (
    <main className="flex min-w-0 flex-1 flex-col border-2 border-[#3a78ab] bg-[#efefef]">
        <div className="flex h-7 shrink-0 items-stretch justify-between border-b-2 border-[#8a8d91]">
            <div className="flex items-center">
                <button type="button" aria-label="后退" className="w-[43px] pl-2.5"><svg width="22" height="18" viewBox="0 0 22 18"><path d="M1 9L11 1V5H21V13H11V17Z" fill="url(#ice)" stroke="#3a6d93" strokeWidth="1.300" /></svg></button>
                <button type="button" aria-label="前进" className="w-[43px] pl-2.5"><svg width="22" height="18" viewBox="0 0 22 18"><path d="M21 9L11 1V5H1V13H11V17Z" fill="#dedede" stroke="#c4c4c4" strokeWidth="1.300" /></svg></button>
                <button type="button" aria-label="向上" className="w-[43px] pl-2.5"><svg width="20" height="20" viewBox="0 0 20 20"><path d="M10 1L19 11H14V19H6V11H1Z" fill="#dedede" stroke="#c4c4c4" strokeWidth="1.300" /></svg></button>
                <a href="#model" className="h-full border-x border-t border-[#d0d0d0] bg-white px-2.5 font-['Liberation_Serif','Noto_Sans_CJK_SC',serif] text-[16px] leading-[25px] text-black">BLDC_2PI</a>
            </div>
            <button type="button" aria-label="键盘" className="pr-3">
                <svg width="20" height="12" viewBox="0 0 20 12"><rect x=".5" y=".5" width="19" height="11" fill="#e4e4e4" stroke="#777" /><path d="M2 3.500H18M2 6H18" stroke="#888" strokeDasharray="2 1" /><path d="M5 9H15" stroke="#888" /></svg>
            </button>
        </div>
        <div className="flex min-h-0 flex-1">
            <aside className="flex w-[51px] shrink-0 flex-col items-center justify-between border-r border-[#80868f] py-2.5">
                <div className="flex flex-col items-center">
                    <button type="button" aria-label="隐藏浏览器" className="h-6 w-6">
                        <svg width="24" height="24" viewBox="0 0 24 24"><circle cx="12" cy="12" r="7.500" fill="#e6e6e6" stroke="#808080" strokeWidth="1.500" /><path d="M7 10.500H11V7L17 12L11 17V13.500H7Z" fill="#444" /></svg>
                    </button>
                    <div className="mb-[17px] mt-[15px] h-px w-[29px] bg-[#a8a8a8]" />
                    <div className="flex flex-col gap-[18px]">
                        {paletteTop.map((item) => <PaletteButton key={item.name} item={item} />)}
                    </div>
                </div>
                <div className="flex flex-col gap-[18px]">
                    {paletteBottom.map((item) => <PaletteButton key={item.name} item={item} />)}
                </div>
            </aside>
            <div className="flex min-w-0 flex-1 flex-col border-b border-r border-[#80868f]">
                <div className="flex min-h-0 flex-1">
                    <div className="relative min-w-0 flex-1 overflow-hidden bg-white">
                        <Diagram />
                    </div>
                    <div className="w-[25px] shrink-0 pl-[7px] pt-[506px]">
                        <div className="h-[534px] w-[11px] bg-[#858585]" />
                    </div>
                </div>
                <div className="h-[25px] shrink-0 pl-[26px] pt-[7px]">
                    <div className="h-[11px] w-[1719px] bg-[#858585]" />
                </div>
            </div>
        </div>
    </main>
);

const App = () => (
    <div className="flex h-screen flex-col overflow-hidden border-b-2 border-[#3a3839] font-['Open_Sans','Noto_Sans_CJK_SC',sans-serif]">
        <SharedDefs />
        <div className="flex min-h-0 flex-1">
            <div className="flex min-w-0 flex-1 flex-col bg-[#efefef]">
                <TitleBar />
                <TabBar />
                <Ribbon />
                <div className="flex min-h-0 flex-1">
                    <Editor />
                    <div className="flex w-[37px] shrink-0 justify-end pr-0.5 pt-0.5">
                        <button type="button" className="flex h-[111px] w-[26px] items-center justify-center border border-[#cfcfcf] bg-white text-[18px] font-light leading-6 text-[#111] [text-orientation:upright] [writing-mode:vertical-rl]">属性检查器</button>
                    </div>
                </div>
                <footer className="relative grid h-7 shrink-0 grid-cols-3 items-center bg-[#f0f0f0] pl-1.5 pr-2.5 text-[18px] leading-7 text-black">
                    <span>就绪</span>
                    <span className="pl-[443px]">200%</span>
                    <span className="text-right text-[#00008b]">ode14x</span>
                    <span className="absolute right-3.5 top-0 font-['Liberation_Sans',sans-serif] text-[15px] text-[#8a8a8a]">CSDN @RicherFan</span>
                </footer>
            </div>
            <div className="flex w-0.5 shrink-0 flex-col bg-[#1c1c1c]">
                <div className="h-[130px] bg-black" />
                <div className="h-[23px] bg-[#f5f5f5]" />
                <div className="h-[25px] bg-[#1f5f95]" />
            </div>
        </div>
    </div>
);

export default App;
